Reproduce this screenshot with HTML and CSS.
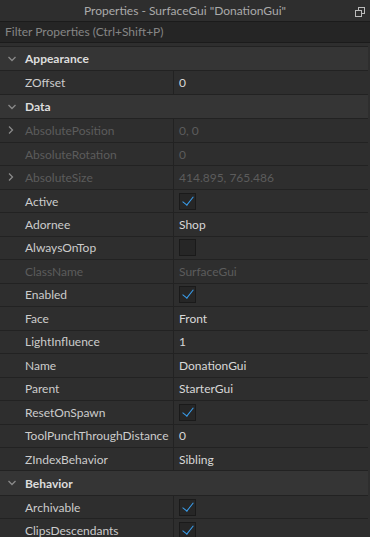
FILE: index.html
```html
<!DOCTYPE html>
<html>
<head>
  <meta charset="UTF-8">
  <title>Properties</title>
  <link rel="stylesheet" href="styles.css">
</head>
<body>
  <div class="titlebar">
    <span>Properties - SurfaceGui "DonationGui"</span>
    <svg class="restore" width="10" height="10" viewBox="0 0 10 10">
      <rect x="3.5" y="0.5" width="6" height="6" fill="none" stroke="#bbb"/>
      <rect x="0.5" y="3.5" width="6" height="6" fill="#2e2e2e" stroke="#bbb"/>
    </svg>
  </div>
  <div class="filter">Filter Properties (Ctrl+Shift+P)</div>

  <div class="list">
    <div class="section"><svg class="chev" viewBox="0 0 10 10"><polyline points="1.5,3 5,6.5 8.5,3"/></svg>Appearance</div>
    <div class="row"><div class="name">ZOffset</div><div class="value">0</div></div>

    <div class="section"><svg class="chev" viewBox="0 0 10 10"><polyline points="1.5,3 5,6.5 8.5,3"/></svg>Data</div>
    <div class="row off"><svg class="arrow" viewBox="0 0 10 10"><polyline points="3,1.5 6.5,5 3,8.5"/></svg><div class="name">AbsolutePosition</div><div class="value">0, 0</div></div>
    <div class="row off"><div class="name">AbsoluteRotation</div><div class="value">0</div></div>
    <div class="row off"><svg class="arrow" viewBox="0 0 10 10"><polyline points="3,1.5 6.5,5 3,8.5"/></svg><div class="name">AbsoluteSize</div><div class="value">414.895, 765.486</div></div>
    <div class="row"><div class="name">Active</div><div class="value"><span class="check on"></span></div></div>
    <div class="row"><div class="name">Adornee</div><div class="value">Shop</div></div>
    <div class="row"><div class="name">AlwaysOnTop</div><div class="value"><span class="check"></span></div></div>
    <div class="row off"><div class="name">ClassName</div><div class="value">SurfaceGui</div></div>
    <div class="row"><div class="name">Enabled</div><div class="value"><span class="check on"></span></div></div>
    <div class="row"><div class="name">Face</div><div class="value">Front</div></div>
    <div class="row"><div class="name">LightInfluence</div><div class="value">1</div></div>
    <div class="row"><div class="name">Name</div><div class="value">DonationGui</div></div>
    <div class="row"><div class="name">Parent</div><div class="value">StarterGui</div></div>
    <div class="row"><div class="name">ResetOnSpawn</div><div class="value"><span class="check on"></span></div></div>
    <div class="row"><div class="name">ToolPunchThroughDistance</div><div class="value">0</div></div>
    <div class="row"><div class="name">ZIndexBehavior</div><div class="value">Sibling</div></div>

    <div class="section"><svg class="chev" viewBox="0 0 10 10"><polyline points="1.5,3 5,6.5 8.5,3"/></svg>Behavior</div>
    <div class="row"><div class="name">Archivable</div><div class="value"><span class="check on"></span></div></div>
    <div class="row"><div class="name">ClipsDescendants</div><div class="value"><span class="check on"></span></div></div>
  </div>
</body>
</html>
```

FILE: styles.css
```css
body {
  margin: 0;
  background: #2e2e2e;
  font-family: "Lato", "Noto Sans", sans-serif;
  font-size: 12px;
  color: #cccccc;
  overflow: hidden;
  height: 537px;
}
.titlebar {
  position: relative;
  height: 21px;
  line-height: 21px;
  text-align: center;
  color: #aaaaaa;
  background: #2e2e2e;
}
.restore {
  position: absolute;
  right: 5px;
  top: 7px;
}
.filter {
  height: 20px;
  line-height: 20px;
  padding-left: 5px;
  background: #252525;
  border-top: 1px solid #1b1b1b;
  border-bottom: 1px solid #1b1b1b;
  color: #858585;
}
.list {
  margin-top: 3px;
  border-top: 1px solid #222222;
  margin-right: 2px;
}
.section {
  display: flex;
  align-items: center;
  height: 24.47px;
  box-sizing: border-box;
  border-bottom: 1px solid #222222;
  background: #353535;
  font-weight: bold;
  color: #dddddd;
  padding-left: 25px;
  position: relative;
}
.row {
  display: flex;
  height: 23.47px;
  box-sizing: border-box;
  border-bottom: 1px solid #222222;
  position: relative;
}
.chev, .arrow {
  position: absolute;
  width: 10px;
  height: 10px;
  fill: none;
  stroke: #8a8a8a;
  stroke-width: 1.3;
}
.chev {
  left: 7px;
  top: 7px;
}
.arrow {
  left: 6px;
  top: 6px;
}
.name {
  width: 148px;
  padding-left: 25px;
  display: flex;
  align-items: center;
  white-space: nowrap;
  border-right: 1px solid #222222;
}
.value {
  flex: 1;
  display: flex;
  align-items: center;
  padding-left: 5px;
  color: #d8d8d8;
}
.off .name, .off .value {
  color: #5c5c5c;
}
.check {
  width: 15px;
  height: 15px;
  background: #262626;
  border: 1px solid #1a1a1a;
  position: relative;
}
.check.on::after {
  content: "";
  position: absolute;
  left: 5px;
  top: 0px;
  width: 5px;
  height: 10px;
  border-right: 1.5px solid #3aa0f0;
  border-bottom: 1.5px solid #3aa0f0;
  transform: rotate(38deg);
}
```
